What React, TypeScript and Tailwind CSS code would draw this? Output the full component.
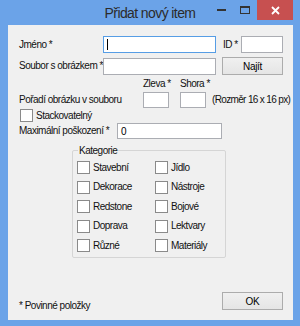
import React from "react";

const font = { fontFamily: '"Liberation Sans", Arial, sans-serif' };

function Box({ w, h = 16, focused = false, children }: { w: number; h?: number; focused?: boolean; children?: React.ReactNode }) {
  return (
    <div
      className={`bg-white border flex items-center pl-[3px] text-[10px] text-black ${focused ? "border-[#569de5]" : "border-[#abadb3]"}`}
      style={{ width: w, height: h }}
    >
      {children}
    </div>
  );
}

function Check({ label }: { label: string }) {
  return (
    <div className="flex items-center h-[13px]">
      <div className="w-[13px] h-[13px] bg-white border border-[#8a8a8a] shrink-0" />
      <span className="ml-[3px] text-[10px] tracking-[-0.5px] text-[#111] leading-none">{label}</span>
    </div>
  );
}

function Btn({ label }: { label: string }) {
  return (
    <div className="w-[61px] h-[18px] border border-[#acacac] bg-gradient-to-b from-[#f0f0f0] to-[#e5e5e5] flex items-center justify-center text-[10px] text-black tracking-[-0.3px]">
      {label}
    </div>
  );
}

const L = "text-[10px] tracking-[-0.5px] text-[#111] leading-none whitespace-nowrap";

export default function App() {
  return (
    <div className="w-[300px] h-[326px] bg-[#6ba3e8] flex flex-col" style={font}>
      {/* title bar */}
      <div className="h-[25px] flex items-start relative">
        <div className="absolute left-0 right-0 top-[3px] text-center text-[14px] tracking-[-0.6px] text-[#2b2b2b]">
          Přidat nový item
        </div>
        <div className="ml-auto flex items-start mr-[7px]">
          <div className="w-[24px] h-[20px] flex items-center justify-center">
            <div className="w-[9px] h-[2px] bg-[#333]" />
          </div>
          <div className="w-[24px] h-[20px] flex items-center justify-center">
            <div className="w-[10px] h-[8px] border border-[#333] border-t-2" />
          </div>
          <div className="w-[36px] h-[20px] bg-[#c75050] flex items-center justify-center">
            <svg width="9" height="9" viewBox="0 0 9 9">
              <path d="M1 1 L8 8 M8 1 L1 8" stroke="white" strokeWidth="1.8" />
            </svg>
          </div>
        </div>
      </div>
      {/* client */}
      <div className="ml-[8px] mr-[7px] h-[295px] bg-[#f0f0f0] flex flex-col pl-[11px]">
        {/* row 1 */}
        <div className="mt-[11px] h-[17px] flex items-center">
          <span className={`${L} w-[84px]`}>Jméno *</span>
          <Box w={113} h={17} focused>
            <div className="w-[1px] h-[11px] bg-black" />
          </Box>
          <span className={`${L} w-[18px] ml-[7px]`}>ID *</span>
          <Box w={42} h={17} />
        </div>
        {/* row 2 */}
        <div className="mt-[4px] h-[18px] flex items-center">
          <span className={`${L} w-[84px]`}>Soubor s obrázkem *</span>
          <Box w={113} h={17} />
          <div className="ml-[6px]">
            <Btn label="Najít" />
          </div>
        </div>
        {/* zleva/shora labels */}
        <div className="mt-[2px] h-[14px] flex items-center">
          <span className={`${L} ml-[124px] w-[37px]`}>Zleva *</span>
          <span className={L}>Shora *</span>
        </div>
        {/* row 3 */}
        <div className="mt-[1px] h-[16px] flex items-center">
          <span className={`${L} w-[124px]`}>Pořadí obrázku v souboru</span>
          <Box w={26} />
          <div className="ml-[11px]">
            <Box w={26} />
          </div>
          <span className={`${L} ml-[6px] tracking-[-0.65px]`}>(Rozměr 16 x 16 px)</span>
        </div>
        {/* stack */}
        <div className="mt-[1px] ml-[1px]">
          <Check label="Stackovatelný" />
        </div>
        {/* max */}
        <div className="mt-[1px] h-[16px] flex items-center">
          <span className={`${L} w-[98px]`}>Maximální poškození *</span>
          <Box w={105}>0</Box>
        </div>
        {/* group */}
        <div className="mt-[11px] ml-[53px] w-[154px] h-[108px] relative border border-[#d5d5d5] rounded-[2px]">
          <span className={`${L} absolute left-[5px] top-[-5px] bg-[#f0f0f0] px-[1px]`}>Kategorie</span>
          <div className="mt-[10px] ml-[4px] grid grid-cols-[78px_1fr] gap-y-[6.5px]">
            <Check label="Stavební" />
            <Check label="Jídlo" />
            <Check label="Dekorace" />
            <Check label="Nástroje" />
            <Check label="Redstone" />
            <Check label="Bojové" />
            <Check label="Doprava" />
            <Check label="Lektvary" />
            <Check label="Různé" />
            <Check label="Materiály" />
          </div>
        </div>
        {/* footer */}
        <div className="mt-[34px] h-[18px] flex items-end">
          <span className={`${L} w-[203px] mb-[-1px]`}>* Povinné položky</span>
          <Btn label="OK" />
        </div>
      </div>
    </div>
  );
}
